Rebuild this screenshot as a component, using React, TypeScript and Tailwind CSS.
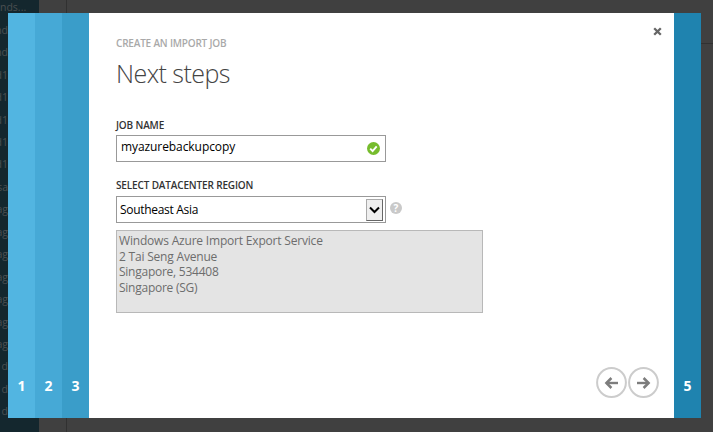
import React from "react";

const sidebarRows = [
  "nds...", "nd", "nd", "d1", "d1", "d1", "d1", "d1", "sa",
  "ag", "ag", "ag", "ag", "ag", "ag", "ag", "l d", "l d", "l d",
];

function Backdrop() {
  return (
    <div className="flex h-full">
      <div className="w-[39px] shrink-0 overflow-hidden bg-[#14272e] text-[10.5px] text-[#4b4f51]">
        {sidebarRows.map((row, i) => (
          <div key={i} className={i === 0 ? "flex h-[19.5px] items-center whitespace-nowrap pb-1" : "flex h-[22.45px] w-2 items-center justify-end whitespace-nowrap"}>
            {row}
          </div>
        ))}
      </div>
      <div className="w-[27px] shrink-0" />
      <div className="grow border-l border-[#313131]">
        <div className="h-11 border-b border-[#313131]" />
      </div>
    </div>
  );
}

function Step({ label, className }: { label: string; className: string }) {
  return (
    <div className={`flex w-[27px] shrink-0 items-end justify-center pb-[22px] text-[14px] leading-5 font-bold text-white ${className}`}>
      {label}
    </div>
  );
}

function ArrowButton({ back }: { back?: boolean }) {
  return (
    <button className="size-[31px]" aria-label={back ? "Back" : "Next"}>
      <svg viewBox="0 0 31 31" className="size-full" fill="none">
        <circle cx="15.5" cy="15.5" r="14.4" stroke="#cccccc" strokeWidth="2" />
        <g transform={back ? "matrix(-1 0 0 1 31 0)" : undefined} stroke="#7d7d7d">
          <path d="M9 16H20.5" strokeWidth="2.4" />
          <path d="M15.6 11L20.6 16L15.6 21" strokeWidth="2.5" />
        </g>
      </svg>
    </button>
  );
}

export default function App() {
  return (
    <div className="relative h-[432px] w-[713px] overflow-hidden bg-[#404040] font-['Open_Sans','Noto_Sans',sans-serif]">
      <Backdrop />
      <div className="absolute top-[13px] left-2 flex h-[405px] w-[693px] bg-white">
        <Step label="1" className="bg-[#52b5e1]" />
        <Step label="2" className="bg-[#46a9d6]" />
        <Step label="3" className="bg-[#3a9dc9]" />
        <main className="flex grow flex-col pl-[27px]">
          <div className="flex h-[49px] justify-between pt-[22px] pr-3">
            <div className="text-[10px] leading-4 font-semibold tracking-[-0.19px] text-[#a9a9a9]">CREATE AN IMPORT JOB</div>
            <svg viewBox="0 0 9 9" className="-mt-2 size-[9px]">
              <path d="M1.2 1.2L7.8 7.8M7.8 1.2L1.2 7.8" stroke="#666" strokeWidth="2.3" />
            </svg>
          </div>
          <h1 className="-mt-[5px] h-8 text-[25px] leading-8 font-light tracking-[-0.55px] text-[#444]">Next steps</h1>
          <label className="mt-[28px] h-4 text-[10px] leading-4 font-semibold tracking-[-0.15px] text-[#333]">JOB NAME</label>
          <div className="mt-[2px] flex h-[27px] w-[270px] items-center justify-between border border-[#999] pr-[5px] pl-1">
            <span className="pb-[3px] text-[12px] leading-4 tracking-[-0.08px] text-black">myazurebackupcopy</span>
            <svg viewBox="0 0 13 13" className="size-[13px]" fill="none">
              <circle cx="6.5" cy="6.5" r="6.5" fill="#76bc2d" />
              <path d="M3.2 6.6L5.6 9L9.7 4.3" stroke="white" strokeWidth="1.9" />
            </svg>
          </div>
          <label className="mt-[15px] h-4 text-[10px] leading-4 font-semibold tracking-[-0.15px] text-[#333]">SELECT DATACENTER REGION</label>
          <div className="mt-[3px] flex items-center gap-1">
            <div className="flex h-[27px] w-[270px] items-center justify-between border border-[#999] pr-[2px] pl-[3px]">
              <span className="text-[12px] leading-4 tracking-[-0.3px] text-black">Southeast Asia</span>
              <div className="flex h-[22px] w-[17px] items-center justify-center border border-t-[#aaa] border-r-[#666] border-b-[#666] border-l-[#aaa] bg-[#efefef]">
                <svg viewBox="0 0 11 8" className="h-2 w-[11px]" fill="none">
                  <path d="M1 1.5L5.5 6L10 1.5" stroke="black" strokeWidth="2" />
                </svg>
              </div>
            </div>
            <div className="-mt-[3px] flex size-3 items-center justify-center rounded-full bg-[#c9c9c9] text-[10px] leading-3 font-bold text-white">?</div>
          </div>
          <div className="mt-[7px] h-[83px] w-[367px] border border-[#b8b8b8] bg-[#e4e4e4] pt-[2px] pl-[2px] text-[12px] leading-[15.6px] text-[#6d6d6d]">
            <p className="tracking-[-0.19px]">Windows Azure Import Export Service</p>
            <p className="tracking-[-0.2px]">2 Tai Seng Avenue</p>
            <p className="tracking-[-0.25px]">Singapore, 534408</p>
            <p className="tracking-[-0.25px]">Singapore (SG)</p>
          </div>
          <div className="mt-auto mb-5 flex justify-end gap-[1px] pr-[15px]">
            <ArrowButton back />
            <ArrowButton />
          </div>
        </main>
        <Step label="5" className="bg-[#1f83af]" />
      </div>
    </div>
  );
}
